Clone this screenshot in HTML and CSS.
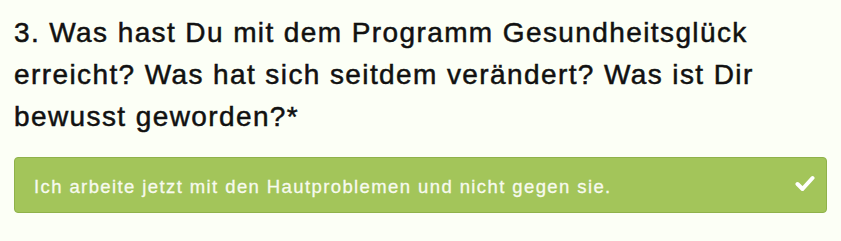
FILE: index.html
```html
<!DOCTYPE html>
<html lang="de">
<head>
    <meta charset="UTF-8">
    <title>Frage 3</title>
    <link rel="stylesheet" href="styles.css">
</head>
<body>
    <div class="question">
        <h2 class="question-title">3. Was hast Du mit dem Programm Gesundheitsglück erreicht? Was hat sich seitdem verändert? Was ist Dir bewusst geworden?*</h2>
        <div class="answer">
            <span class="answer-text">Ich arbeite jetzt mit den Hautproblemen und nicht gegen sie.</span>
            <svg class="check" width="20" height="17" viewBox="0 0 20 17">
                <path d="M2.5 9 L7.5 14 L17.5 3" fill="none" stroke="#fff" stroke-width="4" stroke-linecap="round" stroke-linejoin="round"/>
            </svg>
        </div>
    </div>
</body>
</html>
```

FILE: styles.css
```css
body {
    margin: 0;
    background-color: #fcfff6;
    font-family: "Liberation Sans", Arial, sans-serif;
}
.question {
    padding: 12px 14px 0 14px;
}
.question-title {
    margin: 0 0 19px 0;
    max-width: 790px;
    font-size: 28px;
    font-weight: normal;
    line-height: 42px;
    letter-spacing: 1.4px;
    color: #111;
    -webkit-text-stroke: 0.5px #111;
}
.answer {
    display: flex;
    align-items: center;
    justify-content: space-between;
    width: 813px;
    height: 56px;
    box-sizing: border-box;
    padding: 0 11px 0 19px;
    background-color: #a3c55a;
    border: 1px solid #8fb24a;
    border-radius: 4px;
}
.answer-text {
    padding-top: 3px;
    font-size: 18.5px;
    letter-spacing: 1.4px;
    color: #f7faef;
    -webkit-text-stroke: 0.3px #f7faef;
}
.check {
    margin-top: -4px;
}
```
